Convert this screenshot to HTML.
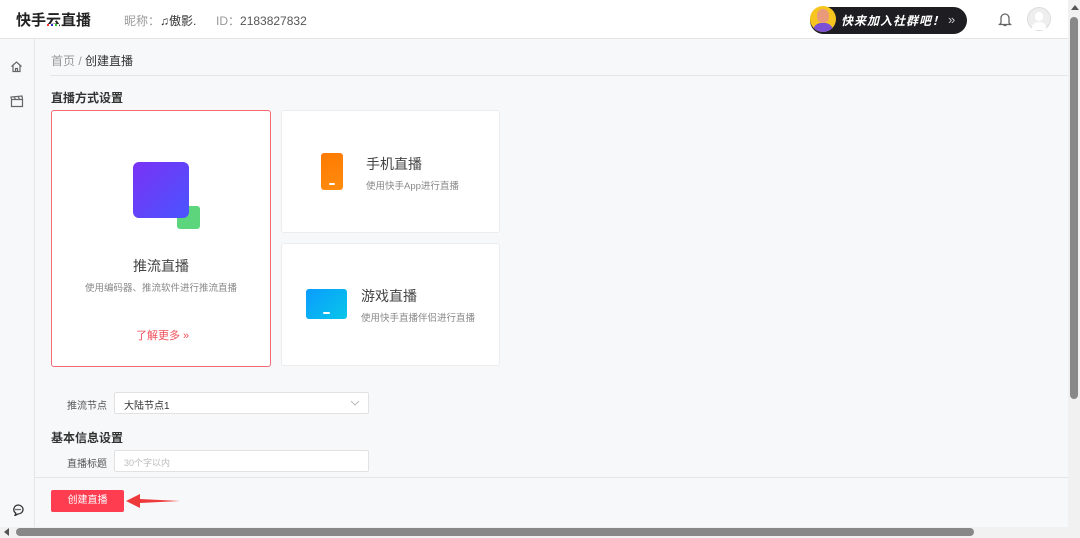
<!DOCTYPE html>
<html><head><meta charset="utf-8"><style>
*{margin:0;padding:0;box-sizing:border-box}
body{width:1080px;height:538px;overflow:hidden;background:#f7f8fa;font-family:"Liberation Sans","Noto Sans CJK SC",sans-serif;position:relative;color:#333}
.abs{position:absolute}
.hdr{left:0;top:0;width:1068px;height:39px;background:#fff;border-bottom:1px solid #e4e4e4}
.side{left:0;top:39px;width:35px;height:488px;background:#f7f8fa;border-right:1px solid #e6e6e6}
.card{background:#fff;border:1px solid #ececec;border-radius:3px}
.t{white-space:nowrap}
.inp{background:#fff;border:1px solid #e2e2e2;border-radius:2px}
</style></head><body>
<div class="abs hdr"></div>
<div class="abs t" style="left:16px;top:9px;font-size:15px;font-weight:bold;color:#222">快手<span style="position:relative">云<span style="position:absolute;left:1px;bottom:2px;width:12px;height:3px;background:#fff"></span><span style="position:absolute;left:1px;bottom:3px;font-size:0"><i style="display:inline-block;width:2px;height:2px;background:#f33;margin-right:2px"></i><i style="display:inline-block;width:2px;height:2px;background:#33c;margin-right:2px"></i><i style="display:inline-block;width:2px;height:2px;background:#3c3"></i></span></span>直播</div>
<div class="abs t" style="left:124px;top:12px;font-size:12px;color:#999">昵称：<span style="color:#333">♫傲影.</span></div>
<div class="abs t" style="left:216px;top:12px;font-size:12px;color:#999">ID：<span style="color:#555">2183827832</span></div>
<div class="abs" style="left:810px;top:7px;width:157px;height:27px;background:#1e1e22;border-radius:14px"></div>
<div class="abs" style="left:810px;top:6px;width:26px;height:26px;border-radius:50%;background:#f7c520;overflow:hidden"><div style="position:absolute;left:7px;top:3px;width:12px;height:14px;border-radius:6px;background:#e89a7a"></div><div style="position:absolute;left:3px;top:17px;width:20px;height:12px;border-radius:8px 8px 0 0;background:#7b4fd6"></div></div>
<div class="abs t" style="left:841px;top:12px;font-size:12px;font-weight:bold;font-style:italic;color:#fff;letter-spacing:1px">快来加入社群吧！</div>
<div class="abs t" style="left:948px;top:12px;font-size:13px;color:#ccc">»</div>
<svg class="abs" style="left:998px;top:12px" width="14" height="15" viewBox="0 0 14 15"><path d="M3 11V6a4 4 0 018 0v5l1.5 1.5h-11z M5.5 13.5h3" fill="none" stroke="#666" stroke-width="1.3"/></svg>
<div class="abs" style="left:1027px;top:7px;width:24px;height:24px;border-radius:50%;background:#eee;border:1px solid #ddd"><div style="position:absolute;left:7px;top:4px;width:8px;height:9px;border-radius:4px;background:#fff"></div><div style="position:absolute;left:4px;top:14px;width:14px;height:8px;border-radius:6px 6px 0 0;background:#fff"></div></div>
<div class="abs side"></div>
<svg class="abs" style="left:10px;top:60px" width="13" height="13" viewBox="0 0 13 13"><path d="M1.5 6.5L6.5 2l5 4.5M3 5.5V11.5h7V5.5M5.5 11.5V8.5h2v3" fill="none" stroke="#666" stroke-width="1.2"/></svg>
<svg class="abs" style="left:10px;top:95px" width="14" height="13" viewBox="0 0 14 13"><path d="M1.5 4.5h11v7h-11zM1.5 4.5L1 2l11-1 .5 3.5M4 1.5l1.5 3M8 1l1.5 3.5" fill="none" stroke="#666" stroke-width="1.2"/></svg>
<svg class="abs" style="left:12px;top:504px" width="12" height="12" viewBox="0 0 12 12"><path d="M6 1a5 4.5 0 110 9l-3 1.5.8-2.3A4.5 4.5 0 016 1z" fill="none" stroke="#333" stroke-width="1.3"/><circle cx="4" cy="5.5" r=".8" fill="#333"/><circle cx="6" cy="5.5" r=".8" fill="#333"/><circle cx="8" cy="5.5" r=".8" fill="#333"/></svg>
<div class="abs t" style="left:51px;top:52px;font-size:12px;color:#999">首页 / <span style="color:#333">创建直播</span></div>
<div class="abs" style="left:50px;top:75px;width:1018px;height:1px;background:#e6e6e6"></div>
<div class="abs t" style="left:51px;top:89px;font-size:12px;font-weight:bold;color:#333">直播方式设置</div>
<div class="abs card" style="left:51px;top:110px;width:220px;height:257px;border:1.5px solid #f56a73"></div>
<div class="abs" style="left:177px;top:206px;width:23px;height:23px;border-radius:3px;background:#5dd57c"></div>
<div class="abs" style="left:133px;top:162px;width:56px;height:56px;border-radius:6px;background:linear-gradient(135deg,#7a32f5,#4a54ff)"></div>
<div class="abs t" style="left:51px;top:256px;width:220px;text-align:center;font-size:14px;color:#444">推流直播</div>
<div class="abs t" style="left:51px;top:280px;width:220px;text-align:center;font-size:9.5px;color:#888">使用编码器、推流软件进行推流直播</div>
<div class="abs t" style="left:136px;top:327px;font-size:11px;color:#f0505a">了解更多 »</div>
<div class="abs card" style="left:281px;top:110px;width:219px;height:123px"></div>
<div class="abs" style="left:321px;top:153px;width:22px;height:37px;border-radius:3px;background:linear-gradient(160deg,#ff7a00,#ff8c10)"><div style="position:absolute;left:8px;top:30px;width:6px;height:2px;background:#fff;border-radius:1px"></div></div>
<div class="abs t" style="left:366px;top:154px;font-size:14px;color:#444">手机直播</div>
<div class="abs t" style="left:366px;top:178px;font-size:9.5px;color:#888">使用快手App进行直播</div>
<div class="abs card" style="left:281px;top:243px;width:219px;height:123px"></div>
<div class="abs" style="left:306px;top:289px;width:41px;height:30px;border-radius:3px;background:linear-gradient(135deg,#0a9cff,#08c6e8)"><div style="position:absolute;left:17px;top:23px;width:7px;height:2px;background:#fff;border-radius:1px"></div></div>
<div class="abs t" style="left:361px;top:286px;font-size:14px;color:#444">游戏直播</div>
<div class="abs t" style="left:361px;top:310px;font-size:9.5px;color:#888">使用快手直播伴侣进行直播</div>
<div class="abs t" style="left:67px;top:397px;font-size:10px;color:#555">推流节点</div>
<div class="abs inp" style="left:114px;top:392px;width:255px;height:22px"></div>
<div class="abs t" style="left:124px;top:397px;font-size:10px;color:#333">大陆节点1</div>
<svg class="abs" style="left:350px;top:400px" width="10" height="6" viewBox="0 0 10 6"><path d="M1 1l4 4 4-4" fill="none" stroke="#bbb" stroke-width="1"/></svg>
<div class="abs t" style="left:51px;top:429px;font-size:12px;font-weight:bold;color:#333">基本信息设置</div>
<div class="abs t" style="left:67px;top:455px;font-size:10px;color:#555">直播标题</div>
<div class="abs inp" style="left:114px;top:450px;width:255px;height:22px"></div>
<div class="abs t" style="left:124px;top:456px;font-size:9px;color:#bbb">30个字以内</div>
<div class="abs" style="left:35px;top:477px;width:1033px;height:1px;background:#e6e6e6"></div>
<div class="abs" style="left:51px;top:490px;width:73px;height:22px;background:#fe3d51;border-radius:2px;color:#fff;font-size:10px;text-align:center;line-height:22px">创建直播</div>
<svg class="abs" style="left:124px;top:492px" width="58" height="18" viewBox="0 0 58 18"><path d="M2 9L16 2v5l40 2-40 2v5z" fill="#ee3a3a"/></svg>
<div class="abs" style="left:1068px;top:0;width:12px;height:527px;background:#f1f1f1"></div>
<div class="abs" style="left:1070px;top:17px;width:8px;height:382px;background:#888;border-radius:4px"></div>
<div class="abs" style="left:1071px;top:5px;width:0;height:0;border-left:4px solid transparent;border-right:4px solid transparent;border-bottom:5px solid #555"></div>
<div class="abs" style="left:0;top:527px;width:1080px;height:11px;background:#f1f1f1"></div>
<div class="abs" style="left:16px;top:528px;width:958px;height:8px;background:#888;border-radius:4px"></div>
<div class="abs" style="left:4px;top:528px;width:0;height:0;border-top:4px solid transparent;border-bottom:4px solid transparent;border-right:5px solid #555"></div>
</body></html>
